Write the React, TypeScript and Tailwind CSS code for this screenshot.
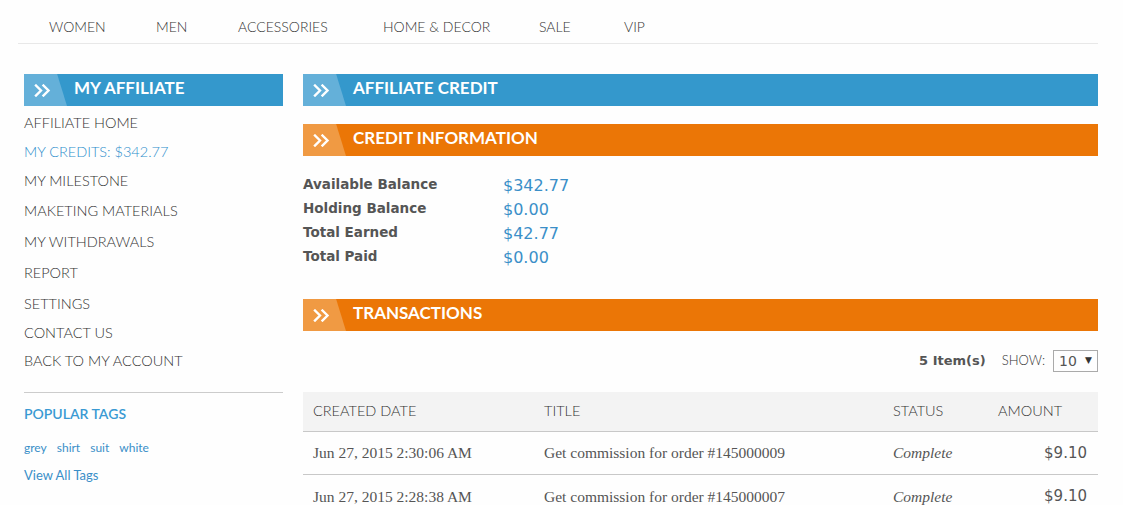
import React from "react";

const raleway = { fontFamily: "Lato, 'Open Sans', sans-serif" };
const verdana = { fontFamily: "'DejaVu Sans', Verdana, sans-serif" };

function Chevrons() {
  return (
    <svg width="18" height="13" viewBox="0 0 18 13" fill="none" stroke="white" strokeWidth="2.4" strokeLinecap="square">
      <path d="M2 1.5 L7 6.5 L2 11.5" />
      <path d="M9.5 1.5 L14.5 6.5 L9.5 11.5" />
    </svg>
  );
}

function SectionBar({ title, color }: { title: string; color: "blue" | "orange" }) {
  const bg = color === "blue" ? "bg-[#3498cc]" : "bg-[#eb7606]";
  const light = color === "blue" ? "bg-[#64b0d9]" : "bg-[#f09a43]";
  return (
    <div className={`relative flex h-[32px] items-center ${bg}`}>
      <div className={`absolute left-0 top-0 h-full w-[43px] ${light} [clip-path:polygon(0_0,77%_0,100%_100%,0_100%)]`} />
      <div className="relative ml-[10px] flex w-[40px] items-center">
        <Chevrons />
      </div>
      <span className="relative -mt-[4px] text-[17px] font-bold text-white" style={raleway}>
        {title}
      </span>
    </div>
  );
}

const navItems = [
  { t: "WOMEN", w: "w-[107px]" },
  { t: "MEN", w: "w-[82px]" },
  { t: "ACCESSORIES", w: "w-[145px]" },
  { t: "HOME & DECOR", w: "w-[156px]" },
  { t: "SALE", w: "w-[85px]" },
  { t: "VIP", w: "w-[60px]" },
];

const links: { t: string; h: string }[] = [
  { t: "AFFILIATE HOME", h: "h-[30px]" },
  { t: "MY CREDITS: $342.77", h: "h-[28px]" },
  { t: "MY MILESTONE", h: "h-[29px]" },
  { t: "MAKETING MATERIALS", h: "h-[32px]" },
  { t: "MY WITHDRAWALS", h: "h-[30px]" },
  { t: "REPORT", h: "h-[32px]" },
  { t: "SETTINGS", h: "h-[30px]" },
  { t: "CONTACT US", h: "h-[27px]" },
  { t: "BACK TO MY ACCOUNT", h: "h-[29px]" },
];

const credit = [
  ["Available Balance", "$342.77"],
  ["Holding Balance", "$0.00"],
  ["Total Earned", "$42.77"],
  ["Total Paid", "$0.00"],
];

const rows = [
  ["Jun 27, 2015 2:30:06 AM", "Get commission for order #145000009", "Complete", "$9.10"],
  ["Jun 27, 2015 2:28:38 AM", "Get commission for order #145000007", "Complete", "$9.10"],
];

export default function App() {
  return (
    <div className="min-h-[505px] w-[1123px] overflow-hidden bg-[#fefefe]">
      <div className="ml-[18px] w-[1080px]">
        {/* nav */}
        <div className="flex h-[44px] border-b border-[#e8e8e8] pl-[31px] pt-[18px]">
          {navItems.map((n) => (
            <div key={n.t} className={`${n.w} text-[14px] font-light leading-[18px] text-[#333]`} style={raleway}>
              {n.t}
            </div>
          ))}
        </div>

        <div className="mt-[30px] flex gap-[20px] pl-[6px]">
          {/* sidebar */}
          <div className="w-[259px] shrink-0">
            <SectionBar title="MY AFFILIATE" color="blue" />
            <div className="mt-[2px]">
              {links.map((l, i) => (
                <div
                  key={l.t}
                  className={`flex ${l.h} items-center text-[14.5px] font-light ${i === 1 ? "text-[#2f8fcc]" : "text-[#333]"}`}
                  style={raleway}
                >
                  {l.t}
                </div>
              ))}
            </div>
            <div className="mt-[17px] border-t border-[#cccccc]" />
            <div className="mt-[12px] text-[14px] font-semibold leading-[18px] text-[#3a9ad3]" style={raleway}>
              POPULAR TAGS
            </div>
            <div className="mt-[18px] flex gap-[10px] text-[12px] leading-[14px] text-[#3a8fc8]" style={raleway}>
              <span>grey</span>
              <span>shirt</span>
              <span>suit</span>
              <span>white</span>
            </div>
            <div className="mt-[12px] text-[13px] leading-[16px] text-[#3a8fc8]" style={raleway}>
              View All Tags
            </div>
          </div>

          {/* main */}
          <div className="w-[795px]">
            <SectionBar title="AFFILIATE CREDIT" color="blue" />
            <div className="mt-[18px]">
              <SectionBar title="CREDIT INFORMATION" color="orange" />
            </div>
            <div className="mt-[16px]">
              {credit.map(([k, v]) => (
                <div key={k} className="flex h-[24px] items-center">
                  <div className="w-[200px] text-[13.5px] font-bold text-[#555]" style={verdana}>
                    {k}
                  </div>
                  <div className="mt-[3px] text-[16px] text-[#3a8fc8]" style={verdana}>
                    {v}
                  </div>
                </div>
              ))}
            </div>
            <div className="mt-[31px]">
              <SectionBar title="TRANSACTIONS" color="orange" />
            </div>
            <div className="mt-[19px] flex h-[22px] items-center justify-end">
              <span className="text-[13px] font-bold text-[#555]" style={verdana}>
                5 Item(s)
              </span>
              <span className="ml-[16px] text-[13px] font-light text-[#333]" style={raleway}>
                SHOW:
              </span>
              <div
                className="ml-[8px] flex h-[22px] w-[45px] items-center justify-between border border-[#aaa] px-[5px] text-[14px] text-[#555]"
                style={verdana}
              >
                <span>10</span>
                <span className="text-[9px] text-[#333]">▼</span>
              </div>
            </div>
            <div className="mt-[20px]">
              <div
                className="flex h-[40px] items-center border-b border-[#c8c8c8] bg-[#f3f3f3] text-[14.5px] font-light text-[#333]"
                style={raleway}
              >
                <div className="w-[241px] pb-[2px] pl-[10px]">CREATED DATE</div>
                <div className="w-[349px] pb-[2px]">TITLE</div>
                <div className="w-[105px] pb-[2px]">STATUS</div>
                <div className="w-[100px] pb-[2px]">AMOUNT</div>
              </div>
              {rows.map((r, i) => (
                <div
                  key={i}
                  className={`flex h-[43px] items-center text-[15.5px] text-[#555] ${i === 0 ? "border-b border-[#c8c8c8]" : ""}`}
                  style={{ fontFamily: "Georgia, 'Liberation Serif', serif" }}
                >
                  <div className="w-[241px] pl-[10px]">{r[0]}</div>
                  <div className="w-[349px]">{r[1]}</div>
                  <div className="w-[105px] italic">{r[2]}</div>
                  <div className="w-[100px] pr-[11px] text-right text-[15px]" style={verdana}>
                    {r[3]}
                  </div>
                </div>
              ))}
            </div>
          </div>
        </div>
      </div>
    </div>
  );
}
